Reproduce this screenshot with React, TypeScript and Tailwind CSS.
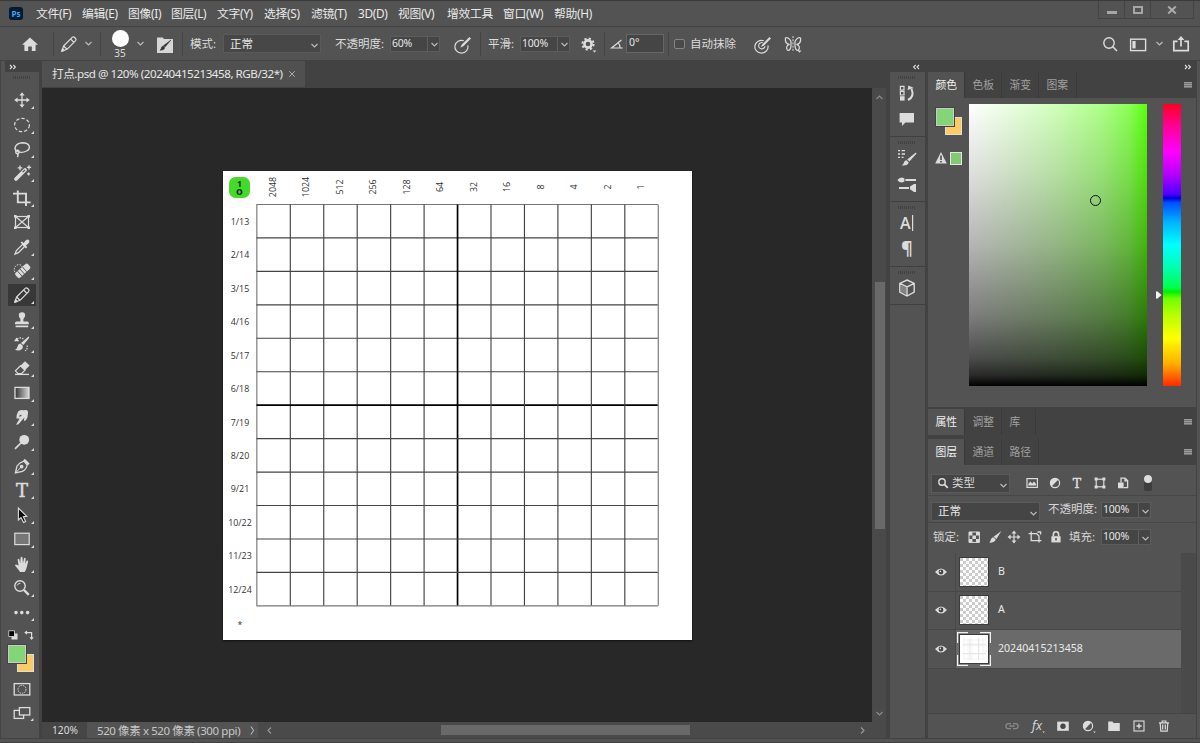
import React from "react";

// every icon is drawn around 0,0 so one unit is one pixel
function Icon({
  size = 24,
  className = "",
  children,
}: {
  size?: number;
  className?: string;
  children: React.ReactNode;
}) {
  return (
    <svg
      width={size}
      height={size}
      viewBox={`${-size / 2} ${-size / 2} ${size} ${size}`}
      className={`shrink-0 ${className}`}
      fill="none"
      stroke="none"
    >
      {children}
    </svg>
  );
}

const C = "#dcdcdc";

const Pencil = () => (
  <g stroke={C} strokeWidth="1.2" strokeLinejoin="round">
    <path d="M-7.2 7.2 L-5.4 2 L3.2 -6.6 Q4.4 -7.6 5.6 -6.5 L6.6 -5.5 Q7.6 -4.4 6.6 -3.3 L-2 5.3 Z" />
    <path d="M1.6 -5 L5 -1.6 M-5.4 2 L-2 5.3" />
    <path d="M-7.2 7.2 L-6.4 4.8 L-4.8 6.4 Z" fill={C} />
  </g>
);

const tools: React.ReactNode[] = [
  // move
  <g key="move">
    <path d="M-6 0 H6 M0 -6 V6" stroke={C} strokeWidth="1.3" />
    <path d="M0 -7.8 L2.6 -4.4 H-2.6 Z M0 7.8 L2.6 4.4 H-2.6 Z M-7.8 0 L-4.4 -2.6 V2.6 Z M7.8 0 L4.4 -2.6 V2.6 Z" fill={C} />
  </g>,
  // marquee
  <ellipse key="marquee" rx="7.4" ry="6.7" stroke={C} strokeWidth="1.2" strokeDasharray="3.4 2" />,
  // lasso
  <g key="lasso" stroke={C} strokeWidth="1.4">
    <path d="M-4.6 2.6 C-9 0 -7 -5.6 0.5 -6.2 C8 -6.2 9.2 -0.4 4.6 2 C1.6 3.6 -1.8 3.6 -4.6 2.6" />
    <circle cx="-4.6" cy="3" r="1.7" />
    <path d="M-5 4.6 C-3.4 5.6 -3.6 7 -4.8 8" />
  </g>,
  // magic wand
  <g key="wand">
    <path d="M-6 6 L3 -3" stroke={C} strokeWidth="3.8" strokeLinecap="round" />
    <path d="M0.6 -0.8 L3 -3.2" stroke="#535353" strokeWidth="1.2" />
    <path d="M-2 -7.4 V-2.8 M-4.3 -5.1 H0.3 M7 -7.8 V-3.6 M4.9 -5.7 H9.1 M6.6 -0.6 V2.4 M5.1 0.9 H8.1" stroke={C} strokeWidth="1.3" />
  </g>,
  // crop
  <path key="crop" d="M-9 -4.4 H4 V8 M-4.2 -7.6 V4.4 H8.6" stroke={C} strokeWidth="1.9" />,
  // frame
  <g key="frame" stroke={C} strokeWidth="1.2">
    <rect x="-6.5" y="-5.5" width="13" height="11" />
    <path d="M-6.5 -5.5 L6.5 5.5 M6.5 -5.5 L-6.5 5.5" />
    <path d="M-8 -7 h2.6 v2.6 h-2.6z M5.4 -7 h2.6 v2.6 h-2.6z M-8 4.4 h2.6 v2.6 h-2.6z M5.4 4.4 h2.6 v2.6 h-2.6z" fill={C} stroke="none" />
  </g>,
  // eyedropper
  <g key="dropper">
    <path d="M-7 7 L-5.6 3.6 L0.6 -2.6 L2.6 -0.6 L-3.6 5.6 Z" stroke={C} strokeWidth="1.3" />
    <path d="M-1.4 -4.4 L0 -5.4 L1.6 -4 L3.6 -6.4 Q5.6 -8.2 7 -6.8 Q8.2 -5.4 6.4 -3.4 L4 -1.4 L5.2 0.2 L4 1.4 Z" fill={C} />
  </g>,
  // healing brush
  <g key="heal">
    <path d="M-5.6 3 C-10 -1 -7 -6.4 -3 -6.4 C-0.6 -6.4 0.4 -4.4 0.4 -3" stroke={C} strokeWidth="1" strokeDasharray="1.4 1.2" />
    <g transform="rotate(-42)">
      <rect x="-7.6" y="-2.9" width="16.6" height="6.6" rx="2" fill={C} />
      <path d="M-3.4 -2.9 V3.7 M-0.2 -2.9 V3.7 M3 -2.9 V3.7" stroke="#535353" strokeWidth=".9" />
    </g>
  </g>,
  <Pencil key="pencil" />,
  // clone stamp
  <path key="stamp" d="M-7 3 Q-7 1.4 -5.4 1.4 H-1.6 V-1 Q-3.4 -3.4 -3.2 -4.8 A3.2 3 0 0 1 3.2 -4.8 Q3.2 -3.2 1.4 -1 V1.4 H5.2 Q6.8 1.4 6.8 3 V4.2 H-7 Z M-6.4 5.4 H6.2 V7.2 H-6.4 Z" fill={C} />,
  // history brush
  <g key="history">
    <path d="M-8 -2.8 L-5.4 -6.6 L-2.8 -2.8 Z M6.6 -7.6 Q7.8 -7.4 7 -6 L1.4 1 L-1 -1 Z M-1.6 -0.4 L0.8 1.8 Q1.2 5.4 -2 6.2 Q-4.6 7 -7 5.8 Q-4.6 4.8 -4.6 2.8 Q-4.2 0 -1.6 -0.4Z" fill={C} />
    <path d="M-5 -5 C-3 -6.6 0 -6.4 1.6 -4.6 M5 1.4 C6 4 4.6 6 3 6.8" stroke={C} strokeWidth="1.1" strokeDasharray="1.6 1" />
  </g>,
  // eraser
  <g key="eraser">
    <path d="M-1.6 -2.2 L3 -6.8 L7.6 -2.6 L3 2.2 Z" fill={C} />
    <path d="M-1.6 -2.2 L3 2.2 L-0.6 5.6 H-4 L-6.6 2.8 Z" stroke={C} strokeWidth="1.2" />
    <path d="M-7 6.4 H7" stroke={C} strokeWidth="1.3" />
  </g>,
  <rect key="gradient" x="-7" y="-5.6" width="14" height="11" fill="url(#gradTool)" stroke={C} strokeWidth="1.3" />,
  // smudge finger
  <path key="smudge" d="M-5.8 7.6 L-2.4 1.6 L-5.6 1.6 Q-5.4 -3 -4 -5.2 Q-2.4 -7.4 1 -6.8 L4.6 -7 Q6.6 -6 6 -3.6 L5.4 0.4 Q4.6 3.4 1.8 4.2 L2.4 0.6 L-2.4 6 Q-4 8.4 -5.8 7.6 Z M-2.2 -2.4 L-2.8 0 L0 -1.2 Z" fill={C} fillRule="evenodd" />,
  // dodge
  <g key="dodge">
    <circle cx="2.2" cy="-2.2" r="4.9" fill={C} />
    <path d="M-1.2 1.2 L-7 6.8" stroke={C} strokeWidth="1.6" />
  </g>,
  // pen
  <g key="pen" stroke={C} strokeWidth="1.3">
    <path d="M-6.6 7 L-5 0 Q-2.6 -3.6 2 -4.8 L5.2 -1 Q4.4 3.4 0.4 5.4 Z" />
    <path d="M2 -6.4 L6.8 -1.6" strokeWidth="2.2" />
    <path d="M-6.6 7 L-1.2 1.4" strokeWidth="1" />
    <circle cx="-0.4" cy="0.6" r="1.2" fill={C} />
  </g>,
  <text key="type" y="6.6" textAnchor="middle" fontSize="18" fill={C} stroke={C} strokeWidth=".5" fontFamily="DejaVu Serif, serif">
    T
  </text>,
  // path selection
  <path key="arrow" d="M-3.6 -7 L-3.6 5 L-1 2.6 L1.6 7.4 L3.6 6.4 L1.4 1.8 L4.8 1.4 Z" fill="#0c0c0c" stroke={C} strokeWidth="1.1" />,
  <rect key="rect" x="-7.2" y="-5.8" width="14.4" height="11.4" fill="#777" stroke={C} strokeWidth="1.2" />,
  // hand
  <path key="hand" d="M-1.9 8 Q-4.6 4.4 -7 1.6 Q-6.8 -0.4 -4.4 1 L-3.4 1.8 L-4.4 -4.4 Q-3.6 -6 -2.6 -4.4 L-1.8 -0.6 L-1.4 -6.6 Q-0.4 -8 0.5 -6.6 L0.9 -0.6 L2 -5.8 Q3.2 -6.8 3.7 -5.4 L3.2 -0.2 L4.8 -3.4 Q6 -4 6.2 -2.6 L4.6 3.8 Q3.8 7 2.6 8 Z" fill={C} />,
  // zoom
  <g key="zoom">
    <circle cx="-2" cy="-2" r="5.2" stroke={C} strokeWidth="1.4" />
    <path d="M-4.8 -2.6 Q-4 -4.8 -1.6 -4.8" stroke={C} strokeWidth="1" />
    <path d="M2 2 L6.8 6.8" stroke={C} strokeWidth="2.4" />
  </g>,
  <path key="more" d="M-6 0 h0.01 M-0.2 0 h0.01 M5.6 0 h0.01" transform="translate(0 .6)" stroke={C} strokeWidth="3.6" strokeLinecap="round" />,
];

const menus = [
  ["文件(F)", "w-[46px]"],
  ["编辑(E)", "w-[46px]"],
  ["图像(I)", "w-[43px]"],
  ["图层(L)", "w-[46px]"],
  ["文字(Y)", "w-[47px]"],
  ["选择(S)", "w-[47px]"],
  ["滤镜(T)", "w-[47px]"],
  ["3D(D)", "w-[40px]"],
  ["视图(V)", "w-[49px]"],
  ["增效工具", "w-[56px]"],
  ["窗口(W)", "w-[51px]"],
  ["帮助(H)", "w-[46px]"],
];

const rowLabels = ["1/13", "2/14", "3/15", "4/16", "5/17", "6/18", "7/19", "8/20", "9/21", "10/22", "11/23", "12/24"];
const colLabels = ["2048", "1024", "512", "256", "128", "64", "32", "16", "8", "4", "2", "1"];

function Chevron({ className = "", color = "#bdbdbd" }: { className?: string; color?: string }) {
  return (
    <svg width="7" height="5" viewBox="0 0 7 5" fill="none" stroke={color} strokeWidth="1.1" className={`shrink-0 ${className}`}>
      <path d="M0.5 1 L3.5 4 L6.5 1" />
    </svg>
  );
}

function Percent({ value, className = "" }: { value: string; className?: string }) {
  return (
    <div className={`flex h-[16px] w-[50px] shrink-0 bg-[#454545] text-[10.5px] leading-[15px] text-[#e6e6e6] outline outline-1 -outline-offset-1 outline-[#5c5c5c] ${className}`}>
      <span className="w-[37px] pl-[2px] tracking-[-0.2px]">{value}</span>
      <span className="flex flex-1 items-center justify-center border-l border-[#5f5f5f] pt-[2px]">
        <Chevron />
      </span>
    </div>
  );
}

function Rule({ className = "" }: { className?: string }) {
  return <div className={`h-[24px] w-px shrink-0 bg-[#444] ${className}`} />;
}

function MenuBar() {
  return (
    <div className="flex h-[27px] border-b border-t border-b-[#424242] border-t-[#3a3a3a]">
      <div className="ml-[9px] mt-[6px] flex h-[13px] w-[14px] items-center justify-center rounded-[3px] bg-[#001d34] text-[8px] font-bold text-[#4ba6f0]">
        Ps
      </div>
      <div className="ml-[13px] flex text-[11.8px] leading-[25px] tracking-[-0.3px] text-[#e9e9e9]">
        {menus.map(([label, width]) => (
          <span key={label} className={`whitespace-nowrap ${width}`}>
            {label}
          </span>
        ))}
      </div>
      <div className="ml-auto mr-[6px] flex h-[18px] border-x border-b border-[#444]">
        <div className="flex w-[26px] justify-center border-r border-[#444]">
          <div className="mt-[10px] h-[3px] w-[10px] bg-[#a6a6a6]" />
        </div>
        <div className="flex w-[26px] justify-center border-r border-[#444]">
          <div className="mt-[5px] h-[8px] w-[10px] border-2 border-[#a6a6a6]" />
        </div>
        <div className="flex w-[42px] justify-center">
          <Icon size={18}>
            <path d="M-3.8 -3.6 L3.8 3.6 M3.8 -3.6 L-3.8 3.6" stroke="#aaa" strokeWidth="2" />
          </Icon>
        </div>
      </div>
    </div>
  );
}

function OptionsBar() {
  return (
    <div className="flex h-[34px] items-center border-b border-[#424242] text-[11.5px] text-[#dcdcdc]">
      <Icon size={20} className="ml-[20px]">
        <path d="M0 -6.4 L8 0.8 H5.6 V7 H1.8 V2.4 H-1.8 V7 H-5.6 V0.8 H-8 Z" fill={C} />
      </Icon>
      <Rule className="ml-[13px]" />
      <Icon className="ml-[3px]">
        <Pencil />
      </Icon>
      <Chevron className="ml-[4px]" />
      <Rule className="ml-[8px]" />
      <div className="ml-[9px] mr-px flex w-[20px] flex-col items-center">
        <div className="h-[17px] w-[17px] shrink-0 rounded-full bg-white" />
        <span className="mt-px text-[10px] leading-[10px]">35</span>
      </div>
      <Chevron className="ml-[6px]" />
      <Icon size={18} className="ml-[12px]">
        <path d="M-8 -6.6 H-2.2 L-1 -5 H8 V9 H-8 Z" fill="#d6d6d6" />
        <path d="M6 -4 L0 3 L-1.4 1.6 Z M-1.8 2 L-0.2 3.8 Q-0.6 6.4 -5 6.2 Q-3.4 5 -3.6 3.6 Q-3 2 -1.8 2 Z" fill="#333" stroke="#333" strokeWidth=".5" />
      </Icon>
      <Rule className="ml-[8px]" />
      <span className="ml-[7px] w-[33px] whitespace-nowrap">模式:</span>
      <div className="flex h-[19px] w-[98px] items-center justify-between bg-[#474747] pl-[7px] pr-[3px] text-[#e8e8e8] outline outline-1 -outline-offset-1 outline-[#5a5a5a]">
        <span>正常</span>
        <Chevron className="mt-[3px]" />
      </div>
      <span className="ml-[14px] w-[55px] whitespace-nowrap">不透明度:</span>
      <Percent value="60%" />
      <Icon size={20} className="ml-[13px]">
        <path d="M1.8 -4.8 A6.6 6.4 0 1 0 5.9 -0.2" stroke={C} strokeWidth="1.2" transform="translate(-1 1.6)" />
        <path d="M-2.6 3.6 L-1.2 0.6 L6.4 -7 L8 -5.4 L0.4 2.2 Z" fill={C} />
      </Icon>
      <Rule className="ml-[7px]" />
      <span className="ml-[7px] w-[32px] whitespace-nowrap">平滑:</span>
      <Percent value="100%" />
      <Icon size={20} className="ml-[8px]">
        <circle r="3.6" stroke={C} strokeWidth="2.6" />
        <circle r="5.6" stroke={C} strokeWidth="2" strokeDasharray="2.2 2.2" />
        <path d="M4.6 6.6 H8.4 L6.5 8.6 Z" fill={C} />
      </Icon>
      <Rule className="ml-[6px]" />
      <Icon size={16} className="ml-[4px]">
        <path d="M4.4 -4 L-5.4 4 H5.8 M1 -1.4 Q3.4 1 3 4" stroke={C} strokeWidth="1.2" />
      </Icon>
      <div className="ml-[1px] h-[19px] w-[38px] bg-[#454545] pl-[3px] text-[10.5px] leading-[17px] text-[#e6e6e6] outline outline-1 -outline-offset-1 outline-[#666]">
        0°
      </div>
      <Rule className="ml-[4px]" />
      <div className="ml-[5px] h-[10px] w-[11px] rounded-[2px] border border-[#858585] bg-[#4a4a4a]" />
      <span className="ml-[5px] w-[60px] whitespace-nowrap">自动抹除</span>
      <Icon size={20} className="ml-[3px]">
        <path d="M1.8 -4.8 A6.6 6.4 0 1 0 5.9 -0.2" stroke={C} strokeWidth="1.2" transform="translate(-1 1.6)" />
        <path d="M-0.4 -1.4 A3.2 3.2 0 1 0 2 2.2" stroke={C} strokeWidth="1.1" />
        <path d="M-2 3 L-0.8 0.4 L6.4 -7 L8 -5.4 L0.8 1.8 Z" fill={C} />
      </Icon>
      <Icon size={20} className="ml-[10px]">
        <path d="M0 -8 V8" stroke={C} strokeWidth="1" strokeDasharray="2 1.2" />
        <path
          d="M-2 -2.6 C-3.6 -6 -6.4 -7 -7.6 -5.8 C-8 -2.4 -6.4 0 -3.4 0.4 C-6.6 1 -7 3.8 -5.6 6 C-3.6 7.4 -2 4.6 -2 1.6 Z M2 -2.6 C3.6 -6 6.4 -7 7.6 -5.8 C8 -2.4 6.4 0 3.4 0.4 C6.6 1 7 3.8 5.6 6 C3.6 7.4 2 4.6 2 1.6 Z"
          stroke={C}
          strokeWidth="1.2"
        />
        <path d="M4.6 6.6 H8.4 L6.5 8.8 Z" fill={C} />
      </Icon>
      <div className="ml-auto mr-[9px] flex items-center">
        <Icon size={20}>
          <circle cx="-1" cy="-1" r="5.2" stroke={C} strokeWidth="1.4" />
          <path d="M2.8 2.8 L7 7" stroke={C} strokeWidth="1.6" />
        </Icon>
        <Icon size={20} className="ml-[8px]">
          <rect x="-7.4" y="-4.8" width="15" height="11.4" stroke={C} strokeWidth="1.4" />
          <rect x="-5.6" y="-3" width="3.2" height="7.4" fill={C} />
        </Icon>
        <Chevron className="ml-[8px]" />
        <Icon size={20} className="ml-[8px]">
          <path d="M-3.4 -2.6 H-7.2 V6.6 H7.2 V-2.6 H3.4 M0 2.6 V-5" stroke={C} strokeWidth="1.7" />
          <path d="M-3.4 -4 L0 -8 L3.4 -4 Z" fill={C} />
        </Icon>
      </div>
    </div>
  );
}

function Grip({ className = "" }: { className?: string }) {
  return (
    <div className={`mx-auto h-[3px] w-[18px] bg-[repeating-linear-gradient(90deg,#414141_0_1px,#535353_1px_2px)] ${className}`} />
  );
}

function DoubleChevron({ left = false }: { left?: boolean }) {
  return (
    <svg width="8" height="6" viewBox="0 0 8 6" fill="none" stroke="#e0e0e0" strokeWidth="1.1" className={left ? "rotate-180" : ""}>
      <path d="M1 1 L3 3 L1 5 M4.4 1 L6.4 3 L4.4 5" />
    </svg>
  );
}

function Toolbar() {
  return (
    <div className="flex w-[34px] shrink-0 flex-col bg-[#535353]">
      <div className="flex h-[11px] items-center bg-[#424242] pl-[4px]">
        <DoubleChevron />
      </div>
      <Grip className="mt-[4px]" />
      <div className="mt-[9px] flex flex-col">
        {tools.map((tool, i) => (
          <div key={i} className="flex h-[24.4px] items-center justify-center">
            <div className={`relative flex h-[22px] w-[28px] items-center justify-center ${i === 8 ? "bg-[#383838]" : ""}`}>
              <Icon size={20}>{tool}</Icon>
              {i !== 5 && (
                <svg width="3" height="3" className="absolute bottom-[2px] right-[2px]">
                  <path d="M3 0 V3 H0 Z" fill={C} />
                </svg>
              )}
            </div>
          </div>
        ))}
      </div>
      <div className="mt-[4px] flex h-[12px] items-center justify-between pl-[2px] pr-[4px]">
        <Icon size={12}>
          <rect x="-1.5" y="-1.5" width="6" height="6" fill={C} />
          <rect x="-4.2" y="-4.2" width="5.6" height="5.6" fill="#000" stroke={C} strokeWidth=".8" />
        </Icon>
        <Icon size={12}>
          <path d="M-3 -2.4 H2.6 V3" stroke={C} strokeWidth="1.2" />
          <path d="M-4.8 -2.4 L-2 -4.6 V-0.2 Z M2.6 5 L0.4 2.2 H4.8 Z" fill={C} />
        </Icon>
      </div>
      <Swatches className="ml-[3px] mt-[4px]" />
      <Icon className="mx-auto mt-[5px]">
        <rect x="-7.8" y="-5.4" width="15.6" height="11.4" stroke={C} strokeWidth="1.3" />
        <circle cy=".3" r="4" stroke={C} strokeWidth="1" strokeDasharray="1.4 1" />
      </Icon>
      <Icon className="mx-auto">
        <rect x="-7.8" y="-2.6" width="9.4" height="8" stroke={C} strokeWidth="1.3" />
        <rect x="-2.6" y="-5.4" width="10.4" height="7.4" fill="#535353" stroke={C} strokeWidth="1.3" />
        <path d="M11.4 5 V8 H8.4 Z" fill={C} />
      </Icon>
    </div>
  );
}

// foreground colour lies over the background colour
function Swatches({ className = "" }: { className?: string }) {
  return (
    <div className={`relative h-[27px] w-[26px] shrink-0 ${className}`}>
      <div className="absolute bottom-0 right-0 h-[18px] w-[17px] border border-[#ddd] bg-[#fccb66]" />
      <div className="absolute left-0 top-0 h-[18px] w-[18px] border border-[#c9c9c9] bg-[#84d478] shadow-[0_0_0_1px_#444]" />
    </div>
  );
}

function Sheet() {
  const step = 33.45;
  const end = step * 13;
  const lines = Array.from({ length: 13 }, (_, i) => i);
  return (
    <svg
      width="469"
      height="469"
      viewBox="0 0 469 469"
      className="ml-[181px] mt-[82.5px] bg-white shadow-[0_1px_2px_#111]"
      fontFamily="'Open Sans', 'Noto Sans', sans-serif"
      fontSize="8.9"
      fill="#333"
      textAnchor="middle"
    >
      {lines.map((i) => (
        <g key={i} stroke={i === 6 ? "#000" : i === 0 || i === 12 ? "#777" : "#444"} strokeWidth={i === 6 ? 1.7 : 1.15}>
          <path d={`M${step * (i + 1) + 0.4} ${step} V${end}`} />
          <path d={`M${step} ${step * (i + 1)} H${end}`} />
        </g>
      ))}
      {rowLabels.map((label, i) => (
        <text key={label} x="17" y={53.8 + i * step}>
          {label}
        </text>
      ))}
      {colLabels.map((label, i) => (
        <text key={label} transform={`translate(${53 + i * step} 16) rotate(-90)`}>
          {label}
        </text>
      ))}
      <text x="17" y="457">*</text>
      <rect x="6" y="6" width="21" height="21" rx="6.5" fill="#45da2a" />
      <text fontWeight="700" fill="#0b300a">
        <tspan x="16.5" y="16.2" fontSize="8.5">1</tspan>
        <tspan x="16.5" y="24" fontSize="11">o</tspan>
      </text>
    </svg>
  );
}

function Document() {
  return (
    <div className="ml-[3px] flex w-[844px] shrink-0 flex-col">
      <div className="flex h-[27px] bg-[#424242]">
        <div className="flex h-[26px] w-[263px] items-center bg-[#505050] pl-[10px] text-[11.6px] tracking-[-0.45px] text-[#e6e6e6]">
          <span className="w-[236px] whitespace-nowrap">打点.psd @ 120% (20240415213458, RGB/32*)</span>
          <Icon size={8}>
            <path d="M-2.8 -2.8 L2.8 2.8 M2.8 -2.8 L-2.8 2.8" stroke="#aaa" strokeWidth="1" />
          </Icon>
        </div>
      </div>
      <div className="flex h-[634px]">
        <div className="w-[830px] bg-[#282828]">
          <Sheet />
        </div>
        <div className="flex flex-1 flex-col items-center bg-[#4a4a4a] pl-px pt-[7px]">
          <Chevron className="rotate-180" color="#8c8c8c" />
          <div className="mt-[182px] h-[247px] w-[10px] bg-[#696969]" />
          <Chevron className="mb-[6px] mt-auto" color="#8c8c8c" />
        </div>
      </div>
      <div className="flex h-[16px] items-center bg-[#4a4a4a] text-[#dcdcdc]">
        <div className="h-full w-[45px] bg-[#464646] pl-[10px] text-[10.2px] leading-[16px]">120%</div>
        <div className="flex h-full w-[171px] items-center bg-[#535353] pl-[10px]">
          <span className="w-[153px] whitespace-nowrap text-[11.5px] leading-[15px] tracking-[-0.4px] text-[#c6c6c6]">
            520 像素 x 520 像素 (300 ppi)
          </span>
          <svg width="5" height="9" viewBox="0 0 5 9" fill="none" stroke="#ccc">
            <path d="M1 .5 L3.5 4.5 L1 8.5" />
          </svg>
        </div>
        <Chevron className="ml-[8px] rotate-90" color="#999" />
        <div className="ml-[168px] h-[10px] w-[249px] bg-[#696969]" />
        <Chevron className="ml-[169px] -rotate-90" color="#999" />
      </div>
    </div>
  );
}

function DockGroup({ children, className }: { children: React.ReactNode; className: string }) {
  return (
    <div className={`flex flex-col items-center border-b border-[#404040] pr-[2px] ${className}`}>
      <Grip className="mt-[4px]" />
      {children}
    </div>
  );
}

function Dock() {
  return (
    <div className="ml-[4px] mr-[3px] flex w-[35px] shrink-0 flex-col bg-[#535353]">
      <div className="flex h-[11px] items-center justify-end bg-[#424242] pr-[5px]">
        <DoubleChevron left />
      </div>
      <DockGroup className="h-[65px]">
        <Icon size={22} className="mt-[3px]">
          <path d="M-6.6 -6.6 h3.6 v3.6 h-3.6z M-6.6 -1.6 h3.6 v3.6 h-3.6z" stroke={C} strokeWidth="1.2" />
          <path d="M-7 3.2 h4.6 v4.4 h-4.6z" fill={C} />
          <path d="M1 7 Q7.6 4 4.6 -4" stroke={C} strokeWidth="2" />
          <path d="M0.6 -3 L1.4 -7.4 L6.8 -5 Z" fill={C} />
        </Icon>
        <Icon size={22} className="mt-[4px]">
          <path d="M-7.4 -6 H7 V3.4 H-1.6 L-5 7 V3.4 H-7.4 Z" fill={C} />
        </Icon>
      </DockGroup>
      <DockGroup className="h-[65px]">
        <Icon size={22} className="mt-[3px]">
          <path d="M-9 -7.4 h2 M-9 -4 h2 M-9 -0.6 h2 M-5.4 -7.4 h3.4 M-5.4 -4 h3.4 M-5.4 -0.6 h2" stroke={C} strokeWidth="1.4" />
          <path d="M9.6 -4.6 L2.4 3.6 L0.2 1.6 L8.8 -5.4 Z M-0.6 2.2 L1.6 4.2 Q1.4 7.8 -5.4 7.4 Q-3.2 6 -3 4.2 Q-2.2 2.2 -0.6 2.2 Z" fill={C} />
        </Icon>
        <Icon size={22} className="mt-[4px]">
          <path d="M-9.6 -4 Q-6.6 -8 -2.6 -5.6 V-2.4 Q-6.6 0 -9.6 -4 Z M-1.6 -5 H9 V-3 H-1.6 Z M-8 3 H2 V5 H-8 Z M3 2.6 L7 0 H9 V8 H7 L3 5.2 Z" fill={C} />
        </Icon>
      </DockGroup>
      <DockGroup className="h-[65px]">
        <Icon size={22} className="mt-[3px]">
          <text x="-1.8" y="6" textAnchor="middle" fontSize="16" fill={C} fontFamily="Open Sans, sans-serif" fontWeight="600">
            A
          </text>
          <path d="M5.6 -8 V8" stroke={C} strokeWidth="1.2" />
        </Icon>
        <Icon size={22} className="mt-[4px]">
          <text x="0" y="5.6" textAnchor="middle" fontSize="18" fontWeight="700" fill={C} fontFamily="Open Sans, sans-serif">
            ¶
          </text>
        </Icon>
      </DockGroup>
      <DockGroup className="h-[38px]">
        <Icon size={22} className="mt-[3px]">
          <path d="M0 -8 L7.2 -4.6 V4 L0 8 L-7.2 4 V-4.6 Z M-7.2 -4.6 L0 -1 L7.2 -4.6 M0 -1 V8" stroke={C} strokeWidth="1.4" />
          <path d="M-6 -3 L-1 -0.4 V6 L-6 3.4 Z" fill="#858585" />
        </Icon>
      </DockGroup>
    </div>
  );
}

function Tabs({ names, widths }: { names: string[]; widths: string[] }) {
  return (
    <div className="flex h-[26px] shrink-0 items-center bg-[#424242] text-[10.8px] text-[#a0a0a0]">
      {names.map((name, i) => (
        <div
          key={name}
          className={`h-full border-r border-[#3a3a3a] pl-[7.5px] leading-[25px] ${widths[i]} ${i === 0 ? "bg-[#535353] text-[#f0f0f0]" : ""}`}
        >
          {name}
        </div>
      ))}
      <div className="ml-auto mr-[4px] h-[6px] w-[8px] bg-[repeating-linear-gradient(180deg,#999_0_1px,#777_1px_2px)]" />
    </div>
  );
}

function ColorPanel() {
  return (
    <div className="flex h-[335px] flex-col bg-[#535353]">
      <Tabs names={["颜色", "色板", "渐变", "图案"]} widths={["w-[37px]", "w-[37px]", "w-[37px]", "w-[38px]"]} />
      <div className="flex pt-[6px]">
        <div className="ml-[8px] w-[33px] pt-[4px]">
          <Swatches />
          <div className="mt-[16px] flex h-[14px] items-center">
            <Icon size={12} className="-ml-[1px]">
              <path d="M0 -6 L5.8 5.6 H-5.8 Z" fill={C} />
              <path d="M0 -2.4 V2 M0 3 V4.6" stroke="#444" strokeWidth="1.5" />
            </Icon>
            <div className="ml-[3px] h-[13px] w-[12px] border border-[#e4e4e4] bg-[#82c973]" />
          </div>
        </div>
        <div className="relative h-[282px] w-[178px] bg-[linear-gradient(to_bottom,rgba(0,0,0,0)_0%,rgba(0,0,0,0.13)_25%,rgba(0,0,0,0.29)_50%,rgba(0,0,0,0.51)_75%,rgba(0,0,0,0.7)_90%,rgba(0,0,0,0.83)_96%,#000_100%),linear-gradient(to_right,#fff_0%,rgba(255,255,255,0.87)_25%,rgba(255,255,255,0.72)_50%,rgba(255,255,255,0.53)_75%,rgba(255,255,255,0.33)_90%,rgba(255,255,255,0.05)_100%),linear-gradient(#50ff00,#50ff00)]">
          <div className="absolute left-[121px] top-[91px] h-[11px] w-[11px] rounded-full border border-[#111]" />
        </div>
        <div className="flex w-[16px] justify-end">
          <svg width="7" height="8" className="mt-[187px]">
            <path d="M0 1 Q0 0 1.5 0.4 L5.6 4 L1.5 7.6 Q0 8 0 7 Z" fill="#f2f2f2" />
          </svg>
        </div>
        <div className="h-[282px] w-[18px] bg-[linear-gradient(180deg,#ff0022_0%,#ff0099_8%,#f0f_17%,#b400ff_25%,#5000ff_32%,#0000d8_33.4%,#0050ff_35%,#00b4ff_42%,#0ff_50%,#00ffb0_58%,#00ff50_65%,#00f000_66.6%,#70ff00_69%,#b8ff00_75%,#ff0_83%,#ffb000_92%,#ff2a00_100%)]" />
      </div>
    </div>
  );
}

function Eye() {
  return (
    <Icon size={16}>
      <path d="M-6 0 Q0 -7 6 0 Q0 7 -6 0 Z" fill={C} />
      <circle r="2.4" fill="#444" />
      <circle cx="-.6" cy="-.6" r=".8" fill={C} />
    </Icon>
  );
}

const Half = () => (
  <g>
    <circle r="4.6" stroke={C} strokeWidth="1.2" />
    <path d="M-3.4 3.4 A4.8 4.8 0 0 1 3.4 -3.4 Z" fill={C} />
  </g>
);

const Brush = () => (
  <path d="M6.4 -6 L1.4 2 L-1.4 -0.2 Z M-1.8 0.2 L0.8 2.6 Q-0.6 5.8 -5.6 6 Q-4.4 3.6 -4 2.2 Q-3 0.2 -1.8 0.2 Z" fill={C} />
);

function LayerRow({ name, thumb, selected = false }: { name: string; thumb: React.ReactNode; selected?: boolean }) {
  return (
    <div className="flex h-[38.6px] border-b border-[#474747]">
      <div className="flex w-[28px] items-center border-r border-[#494949] pl-[5px]">
        <Eye />
      </div>
      <div className={`flex flex-1 items-center pl-px text-[10.6px] text-[#e8e8e8] ${selected ? "bg-[#6a6a6a]" : ""}`}>
        <svg width="34" height="34" viewBox="-3 -3 34 34">
          <rect x="-1" y="-1" width="30" height="30" fill="#3c3c3c" />
          {thumb}
          {selected && (
            <path d="M-2.4 8 V-2.4 H8 M20 -2.4 H30.4 V8 M30.4 20 V30.4 H20 M8 30.4 H-2.4 V20" fill="none" stroke="#f0f0f0" strokeWidth="1.2" />
          )}
        </svg>
        <span className="ml-[7px]">{name}</span>
      </div>
    </div>
  );
}

function LayersPanel() {
  const checker = <rect width="28" height="28" fill="url(#checker)" />;
  return (
    <div className="flex flex-1 flex-col text-[11.5px] text-[#d6d6d6]">
      <Tabs names={["图层", "通道", "路径"]} widths={["w-[37px]", "w-[37px]", "w-[37px]"]} />
      <div className="flex h-[31px] items-center border-b border-[#474747] pl-[3px] pt-[6px]">
        <div className="flex h-[19px] w-[79px] items-center bg-[#454545] pl-[6px] pr-[3px] outline outline-1 -outline-offset-1 outline-[#5a5a5a]">
          <Icon size={12}>
            <circle cx="-1" cy="-1" r="3.2" stroke={C} strokeWidth="1.4" />
            <path d="M1.4 1.4 L4.8 4.8" stroke={C} strokeWidth="1.8" />
          </Icon>
          <span className="ml-[3px]">类型</span>
          <Chevron className="ml-auto mt-[4px]" />
        </div>
        <div className="ml-[14px] flex gap-[6.7px]">
          <Icon size={16}>
            <rect x="-5" y="-4.4" width="10.4" height="8.8" stroke={C} strokeWidth="1.2" />
            <path d="M-3.6 2.6 V1 L-1.6 -1.4 L0.2 0.4 L2 -1.4 L4 1 V2.6 Z" fill={C} />
          </Icon>
          <Icon size={16}>
            <Half />
          </Icon>
          <Icon size={16}>
            <text y="4.6" textAnchor="middle" fontSize="12.5" fill={C} stroke={C} strokeWidth=".5" fontFamily="DejaVu Serif, serif">
              T
            </text>
          </Icon>
          <Icon size={16}>
            <rect x="-3.8" y="-3.8" width="7.6" height="7.6" stroke={C} strokeWidth="1.2" />
            <path d="M-5.4 -5.4 h3v3h-3z M2.4 -5.4 h3v3h-3z M-5.4 2.4 h3v3h-3z M2.4 2.4 h3v3h-3z" fill={C} />
          </Icon>
          <Icon size={16}>
            <path d="M-2 -0.6 V-4.8 H2 L4.6 -2.4 V4.6 H0.6" stroke={C} strokeWidth="1.3" />
            <path d="M-5 -0.6 H0.6 V5.2 H-5 Z M1.4 -5 V-1.6 H4.8 Z" fill={C} />
          </Icon>
        </div>
        <div className="mb-px ml-[13px] h-[16px] w-[8px] rounded-[2px] bg-[#3d3d3d]">
          <div className="h-[8px] w-[8px] rounded-full bg-[#dcdcdc]" />
        </div>
      </div>
      <div className="flex h-[27px] items-center border-b border-[#474747] pl-[3px]">
        <div className="mt-[4px] flex h-[19px] w-[109px] items-center justify-between bg-[#454545] pl-[7px] pr-[3px] text-[#e8e8e8] outline outline-1 -outline-offset-1 outline-[#5a5a5a]">
          <span>正常</span>
          <Chevron className="mt-[4px]" />
        </div>
        <span className="ml-[8px] w-[53px] whitespace-nowrap">不透明度:</span>
        <Percent value="100%" className="mt-[2px]" />
      </div>
      <div className="flex h-[30px] items-center pb-[2px] pl-[5px]">
        <span className="w-[33px] whitespace-nowrap">锁定:</span>
        <Icon size={16}>
          <path d="M-5 -5 H5.4 V5.4 H-5 Z" stroke={C} strokeWidth="1" />
          <path d="M-5 -5 h3.4v3.4h-3.4z M2 -5 h3.4v3.4h-3.4z M-1.6 -1.6 h3.6v3.6h-3.6z M-5 2 h3.4v3.4h-3.4z M2 2 h3.4v3.4h-3.4z" fill={C} />
        </Icon>
        <Icon size={16} className="ml-[5px]">
          <Brush />
        </Icon>
        <Icon size={16} className="ml-[3px]">
          <path d="M-5 0 H5 M0 -5 V5" stroke={C} strokeWidth="1.2" />
          <path d="M0 -6.4 L2.4 -3.4 H-2.4 Z M0 6.4 L2.4 3.4 H-2.4 Z M-6.4 0 L-3.4 -2.4 V2.4 Z M6.4 0 L3.4 -2.4 V2.4 Z" fill={C} />
        </Icon>
        <Icon size={16} className="ml-[5px]">
          <path d="M-6.4 -3.4 H1.6 L4 -1 V5.6 M-3.8 -5.6 V3.6 H6.4 M2.4 -5 H5.6 V-2.4" stroke={C} strokeWidth="1.3" />
        </Icon>
        <Icon size={16} className="ml-[5px]">
          <path d="M-4.6 -0.8 H4.6 V5.4 H-4.6 Z" fill={C} />
          <path d="M-2.6 -0.8 V-2.6 A2.6 2.6 0 0 1 2.6 -2.6 V-0.8" stroke={C} strokeWidth="1.6" />
          <path d="M0 1 V3.4" stroke="#444" strokeWidth="1.4" />
        </Icon>
        <span className="ml-[5px] w-[32px] whitespace-nowrap">填充:</span>
        <Percent value="100%" />
      </div>
      <div className="flex h-[161px] border-b border-[#444]">
        <div className="flex w-[253px] flex-col">
          <LayerRow name="B" thumb={checker} />
          <LayerRow name="A" thumb={checker} />
          <LayerRow
            name="20240415213458"
            selected
            thumb={
              <g>
                <rect width="28" height="28" fill="#fff" />
                <path d="M4 3 V25 M8 3 V25 M12 3 V25 M19 3 V25 M23 3 V25 M3 5 H26 M3 9 H26 M3 19 H26 M3 24 H26" stroke="#eee" strokeWidth=".7" />
                <path d="M10 3 V25 M18.5 3 V25 M3 10 H26 M3 18.5 H26" stroke="#dedede" strokeWidth=".7" />
              </g>
            }
          />
          <div className="flex-1 bg-[#4e4e4e]" />
        </div>
        <div className="flex-1 bg-[#4a4a4a]" />
      </div>
      <div className="flex h-[24px] items-center gap-[9.4px] pl-[76px]">
        <Icon size={16}>
          <path d="M-1 -2.4 H-3.6 A2.4 2.4 0 0 0 -3.6 2.6 H-1 M1 -2.4 H3.6 A2.4 2.4 0 0 1 3.6 2.6 H1 M-2.6 0 H2.6" stroke="#8a8a8a" strokeWidth="1.3" />
        </Icon>
        <Icon size={16}>
          <text x="0" y="3.6" textAnchor="middle" fontSize="12.5" fontStyle="italic" fill={C} fontFamily="Open Sans, sans-serif">
            fx
          </text>
          <path d="M5.4 5.4 h2.4 l-1.2 1.6z" fill={C} />
        </Icon>
        <Icon size={16}>
          <path d="M-5.8 -4.4 H5.8 V4.8 H-5.8 Z" fill={C} />
          <circle cy=".2" r="2.7" fill="#484848" />
        </Icon>
        <Icon size={16}>
          <Half />
          <path d="M5.2 5.4 h2.6 l-1.3 1.7z" fill={C} />
        </Icon>
        <Icon size={16}>
          <path d="M-5.8 -4.6 H-1.6 L-0.4 -3 H5.8 V5 H-5.8 Z" fill={C} />
        </Icon>
        <Icon size={16}>
          <rect x="-5" y="-5" width="10" height="10" stroke={C} strokeWidth="1.1" />
          <path d="M-2.6 0 H2.6 M0 -2.6 V2.6" stroke={C} strokeWidth="1.4" />
        </Icon>
        <Icon size={16}>
          <path d="M-5 -3.2 H5 M-1.8 -3.4 V-5 H1.8 V-3.4 M-3.8 -3 L-3.2 5.2 H3.2 L3.8 -3 M-1.3 -1.4 V3.6 M1.3 -1.4 V3.6" stroke={C} strokeWidth="1.2" />
        </Icon>
      </div>
    </div>
  );
}

function App() {
  return (
    <div className="flex h-[743px] w-[1200px] flex-col overflow-hidden bg-[#535353] font-['Noto_Sans','Noto_Sans_CJK_SC',sans-serif]">
      <svg width="0" height="0" className="absolute">
        <defs>
          <linearGradient id="gradTool">
            <stop offset="0" stopColor="#333" />
            <stop offset="1" stopColor="#d8d8d8" />
          </linearGradient>
          <pattern id="checker" width="6" height="6" patternUnits="userSpaceOnUse">
            <rect width="6" height="6" fill="#fff" />
            <path d="M0 0 h3v3h-3z M3 3 h3v3h-3z" fill="#ccc" />
          </pattern>
        </defs>
      </svg>
      <MenuBar />
      <OptionsBar />
      <div className="flex h-[677px] border-l border-[#454545] pl-[4px]">
        <div className="flex bg-[#424242]">
          <Toolbar />
          <Document />
          <Dock />
          <div className="flex w-[268px] flex-col">
            <div className="flex h-[11px] items-center justify-end pr-[4px]">
              <DoubleChevron />
            </div>
            <ColorPanel />
            <div className="mt-[2px]">
              <Tabs names={["属性", "调整", "库"]} widths={["w-[37px]", "w-[37px]", "w-[34px]"]} />
            </div>
            <div className="mt-[4px] flex flex-1 flex-col bg-[#535353]">
              <LayersPanel />
            </div>
          </div>
        </div>
        <div className="w-px bg-[#424242]" />
      </div>
      <div className="flex-1 border-b border-t border-[#424242]" />
    </div>
  );
}

export default App;
